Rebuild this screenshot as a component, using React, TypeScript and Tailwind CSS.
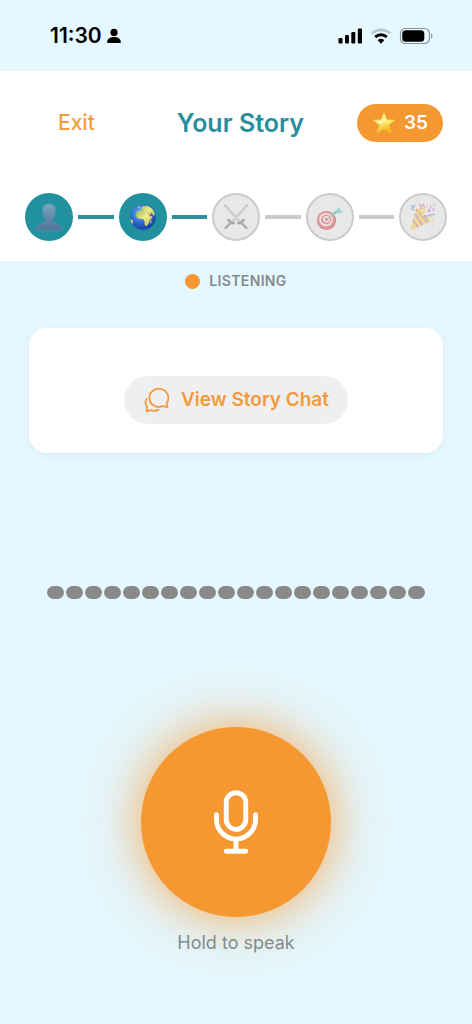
import type { ReactNode } from "react";
import { IoChatbubblesOutline, IoMicOutline } from "react-icons/io5";

function StatusBar() {
  return (
    <div className="flex h-[71px] items-center justify-between pr-[39px] pl-[50px] text-black">
      <div className="flex items-center gap-1">
        <span className="text-[21px] leading-6 font-semibold">11:30</span>
        <svg className="h-4 w-4" viewBox="0 0 16 16" fill="currentColor" aria-hidden="true">
          <circle cx="8" cy="4.4" r="3.6" />
          <path d="M1.2 14c0-3.300 3-5 6.800-5s6.800 1.700 6.800 5c0 .7-.4 1-1 1H2.200c-.6 0-1-.3-1-1z" />
        </svg>
      </div>
      <div className="flex items-center gap-[7px]">
        <svg className="h-4 w-[25px]" viewBox="0 0 25 16" fill="currentColor" aria-hidden="true">
          <rect x="0.500" y="10" width="4" height="5.500" rx="1.200" />
          <rect x="7" y="7" width="4" height="8.500" rx="1.200" />
          <rect x="13.300" y="4" width="4" height="11.500" rx="1.200" />
          <rect x="19.800" y="0.500" width="4.200" height="15" rx="1.200" />
        </svg>
        <svg className="h-4 w-[22px]" viewBox="0 0 22 16" fill="none" aria-hidden="true">
          <path d="M2 5.500a13 13 0 0 1 18 0" stroke="#b9c8ce" strokeWidth="2.600" />
          <path d="M5.200 9a8.500 8.500 0 0 1 11.600 0" stroke="#000" strokeWidth="3" />
          <path d="M7.700 12.200a5 5 0 0 1 6.600 0L11 15.800z" fill="#000" />
        </svg>
        <svg className="h-[18px] w-[34px]" viewBox="0 0 34 18" aria-hidden="true">
          <rect x="1.500" y="1.500" width="29" height="15" rx="5" fill="none" stroke="#8b969b" strokeWidth="1.200" />
          <rect x="3.300" y="3.300" width="22" height="11.400" rx="3.500" fill="#000" />
          <path d="M32 6.500c2 .8 2 4.200 0 5z" fill="#8b969b" />
        </svg>
      </div>
    </div>
  );
}

function StarIcon() {
  return (
    <svg className="h-6 w-6" viewBox="0 0 24 24" aria-hidden="true">
      <defs>
        <linearGradient id="star" x1="0" y1="0" x2="0.200" y2="1">
          <stop offset="0" stopColor="#fff6b0" />
          <stop offset="0.500" stopColor="#fff08c" />
          <stop offset="1" stopColor="#eeb80c" />
        </linearGradient>
      </defs>
      <path
        d="M12 1.500l2.900 7.300 8 .3-6.200 4.900 2.300 7.900-7-4.500-7 4.500L7.300 14 1.100 9.100l8-.3z"
        fill="url(#star)"
        stroke="#f6ce3b"
        strokeWidth="0.800"
        strokeLinejoin="round"
      />
      <path d="M12 4l-1.800 6-6 .2 5 2.600z" fill="#fffbd8" opacity="0.800" />
    </svg>
  );
}

function PersonIcon() {
  return (
    <svg className="h-7 w-7" viewBox="0 0 28 28" aria-hidden="true">
      <defs>
        <linearGradient id="person" x1="0" y1="0" x2="0" y2="1">
          <stop offset="0" stopColor="#7ba4bd" />
          <stop offset="1" stopColor="#4d7399" />
        </linearGradient>
      </defs>
      <path
        d="M14 .8c-4.100 0-6.700 3-6.500 7.100.1 3.500 1.300 6.200 3.200 7.700 0 2.300-.3 3.300-1.600 3.900-3.600 1.500-7.500 2.300-8.200 7.600h26.200c-.7-5.300-4.600-6.100-8.200-7.600-1.300-.6-1.600-1.600-1.600-3.900 1.900-1.500 3.100-4.200 3.200-7.700C20.700 3.800 18.100.8 14 .8z"
        fill="url(#person)"
        stroke="#6d91ac"
        strokeWidth="0.500"
      />
    </svg>
  );
}

function GlobeIcon() {
  return (
    <svg className="h-7 w-7" viewBox="0 0 28 28" aria-hidden="true">
      <defs>
        <radialGradient id="sea" cx="0.420" cy="0.350" r="0.680">
          <stop offset="0" stopColor="#70c4ef" />
          <stop offset="0.550" stopColor="#306bd0" />
          <stop offset="1" stopColor="#173a9b" />
        </radialGradient>
        <linearGradient id="land" x1="0" y1="0" x2="1" y2="1">
          <stop offset="0" stopColor="#9cbd58" />
          <stop offset="0.500" stopColor="#f3eb8e" />
          <stop offset="1" stopColor="#b8b84c" />
        </linearGradient>
      </defs>
      <circle cx="14" cy="14" r="12.800" fill="url(#sea)" />
      <path
        d="M8.500 8.500c2-1.400 4.200-1.700 6-1 .9 1 2.200.8 3.800 1.200 1 1.200 1.400 3 2.500 4.500l2.700.1c-.3 1.900-2.100 3-2.900 4.600-.3 1.600-1 3-2.200 4.300-1.100 1.200-2.500.7-2.700-.8-.3-1.700.2-2.800-.8-4.300-.4-1.200-1.400-1.400-2.900-1.200-2.300.2-4.700-1.200-4.900-3.300.1-1.800.3-2.900 1.400-4.100z"
        fill="url(#land)"
      />
      <path
        d="M11.500 5.900l1.300-2.200c2.400-1.500 5.700-1.400 8.100.3 2.700 1.800 4.600 4.500 5.200 7.600l-1.800 1.300-1.800-3.400-1.700 3.300-2.100-4-3.600-.3-.6-1.500z"
        fill="url(#land)"
      />
      <path d="M1.400 16c1.900.4 2.900 1.900 2.500 3.700l-.5 1.200c-1.100-1.500-1.800-3.200-2-4.900zM21.800 17.500l1-.6-.6 3-1 .5z" fill="#dfda70" />
      <path d="M8.600 4.400l1.700-1.200 1.200.3-1.800 1.500z" fill="#c9ddb0" />
    </svg>
  );
}

function SwordsIcon() {
  return (
    <svg className="h-7 w-7" viewBox="0 0 28 28" fill="none" strokeLinecap="round" aria-hidden="true">
      <path d="M3 2.500l14.500 16M25 2.500l-14.500 16" stroke="#bdbebf" strokeWidth="2.200" />
      <path d="M3.500 3.500l14 15M24.500 3.500l-14 15" stroke="#e0e1e1" strokeWidth="1" />
      <path d="M6.500 17c1.400 1.200 1.900 3.300 5.200 3.200M21.500 17c-1.400 1.200-1.900 3.300-5.200 3.200" stroke="#a2a3a3" strokeWidth="2.400" />
      <path d="M9.300 19.300L3.500 25M18.700 19.300l5.800 5.700" stroke="#a9aaaa" strokeWidth="2.400" />
      <path d="M8.300 20.300l-1 1M19.700 20.300l1 1" stroke="#c3c3c3" strokeWidth="1" />
    </svg>
  );
}

function TargetIcon() {
  return (
    <svg className="h-7 w-7" viewBox="0 0 28 28" aria-hidden="true">
      <ellipse cx="10.500" cy="17.500" rx="9.600" ry="9.500" fill="#d58f92" />
      <ellipse cx="9.800" cy="16.700" rx="8.900" ry="8.700" fill="#e1999b" />
      <ellipse cx="10" cy="16.600" rx="6.800" ry="6.700" fill="#f0e6e6" />
      <ellipse cx="10.200" cy="16.500" rx="5.100" ry="5" fill="#df999c" />
      <ellipse cx="10.500" cy="16.300" rx="3.300" ry="3.300" fill="#f1e7e7" />
      <circle cx="10.700" cy="16.200" r="1.700" fill="#dc9195" />
      <path d="M10.700 16.200l8-6" stroke="#b4c5c4" strokeWidth="1.400" />
      <path d="M15.500 12.500l6-4.600" stroke="#96ccc4" strokeWidth="3" />
      <path d="M19.500 8.500l2.100-4.300 2.600.6-.3 2.600 3 .7-1 2.100-4.900.4z" fill="#a4ded5" />
      <path d="M20.500 8.900l3.400-1.500" stroke="#7fbab3" strokeWidth="0.800" />
    </svg>
  );
}

function PartyIcon() {
  return (
    <svg className="h-7 w-7" viewBox="0 0 28 28" fill="none" strokeLinecap="round" aria-hidden="true">
      <path d="M7.500 6.500c3.500 1.700 8.800 6.900 12.500 12L3 26.800c-1 .4-1.700-.3-1.500-1.300z" fill="#efda91" />
      <path d="M6.500 11.500l6.800 10.300M4.500 17.500l4.300 6.500M8 6.900l10 12.500" stroke="#d6adc7" strokeWidth="1.900" />
      <path d="M8 6.500c3.600 1.600 8.600 6.600 12 11.500" stroke="#dfc477" strokeWidth="1.700" />
      <path d="M10.500 8.500c1-3 4.200-3.800 4.700-1.100.2 2-1.200 3.300-1.900 4.600" stroke="#efdc94" strokeWidth="2.600" />
      <path d="M16 13.500c3.300-.4 6-2.600 9.300-2" stroke="#aab9df" strokeWidth="1.500" />
      <path d="M1.500 2.500L4 3.800 2.500 6l3.200 1.200M5.500 1.500l-.8 2.800" stroke="#aebcdf" strokeWidth="1.300" />
      <path d="M10.500 1l1.800 2 1.900-1.500 1.200 3M12.300 3l-1 3" stroke="#dfaac5" strokeWidth="1.300" />
      <path d="M19 8.500l1.500-2 .6 1.900M21.500 4.500l.3-1.500M24 7.500l1.200-2.300M25 2.200l.5-.7" stroke="#d9a9d2" strokeWidth="1.400" />
      <path d="M17.500 4l.7-1.300M21 13.500l2.200 1M23 17.500l1.500.5M22.500 21.500l.8.500" stroke="#ecd29a" strokeWidth="1.400" />
    </svg>
  );
}

type Step = { name: string; icon: ReactNode; reached: boolean };

const steps: Step[] = [
  { name: "Character", icon: <PersonIcon />, reached: true },
  { name: "World", icon: <GlobeIcon />, reached: true },
  { name: "Conflict", icon: <SwordsIcon />, reached: false },
  { name: "Goal", icon: <TargetIcon />, reached: false },
  { name: "Celebration", icon: <PartyIcon />, reached: false },
];

function Progress() {
  return (
    <ol className="mt-[51px] flex items-center px-[25px]">
      {steps.map((step, i) => (
        <li key={step.name} aria-label={step.name} className={i < steps.length - 1 ? "flex flex-1 items-center" : "flex items-center"}>
          <span
            className={
              step.reached
                ? "flex size-12 shrink-0 items-center justify-center rounded-full bg-[#2191a0]"
                : "flex size-12 shrink-0 items-center justify-center rounded-full border-2 border-[#cbcbcb] bg-[#e8e8e8]"
            }
          >
            {step.icon}
          </span>
          {i < steps.length - 1 && (
            <span className={step.reached ? "mx-[5px] h-1 flex-1 bg-[#2b8f9d]" : "mx-[5px] h-1 flex-1 bg-[#cbcbcb]"} />
          )}
        </li>
      ))}
    </ol>
  );
}

export default function App() {
  return (
    <div className="flex min-h-screen flex-col bg-[#e5f7ff] font-['Inter',sans-serif]">
      <StatusBar />
      <header className="bg-white pt-[33px] pb-5">
        <div className="flex items-center justify-between px-[29px]">
          <button type="button" className="px-[29px] text-[21px] leading-6 font-medium text-[#f59b42]">
            Exit
          </button>
          <h1 className="text-[25px] leading-8 font-semibold text-[#288d9c]">Your Story</h1>
          <div className="flex h-[38px] items-center gap-2 rounded-full bg-[#f59832] px-[15px] text-white">
            <StarIcon />
            <span className="text-[19px] leading-6 font-semibold">35</span>
          </div>
        </div>
        <Progress />
      </header>
      <main className="flex flex-1 flex-col items-center">
        <div className="mt-2 flex items-center gap-[9px]">
          <span className="size-[15px] rounded-full bg-[#f59832]" />
          <span className="text-[14px] leading-6 font-semibold tracking-wide text-[#868b8e]">LISTENING</span>
        </div>
        <div className="mt-[35px] w-full px-[29px]">
          <section className="flex justify-center rounded-[18px] bg-white pt-12 pb-[29px] shadow-[0_2px_10px_rgba(0,60,80,0.05)]">
            <button type="button" className="flex h-12 items-center gap-[10px] rounded-full bg-[#efefef] px-[19px] text-[#f29a3c]">
              <IoChatbubblesOutline className="size-7" aria-hidden="true" />
              <span className="text-[19px] leading-6 font-semibold">View Story Chat</span>
            </button>
          </section>
        </div>
        <div className="mt-[133px] flex gap-[2px]" aria-hidden="true">
          {Array.from({ length: 20 }, (_, i) => (
            <span key={i} className="h-[13px] w-[17px] rounded-[7px] bg-[#8a8989]" />
          ))}
        </div>
        <button
          type="button"
          aria-label="Hold to speak"
          className="mt-32 flex size-[190px] items-center justify-center rounded-full bg-[#f59832] text-white shadow-[0_0_48px_rgba(245,152,50,0.75),0_0_90px_rgba(245,190,110,0.2)]"
        >
          <IoMicOutline className="size-[78px]" aria-hidden="true" />
        </button>
        <p className="relative mt-[14px] text-[18px] leading-6 text-[#858b8c]">Hold to speak</p>
      </main>
    </div>
  );
}
